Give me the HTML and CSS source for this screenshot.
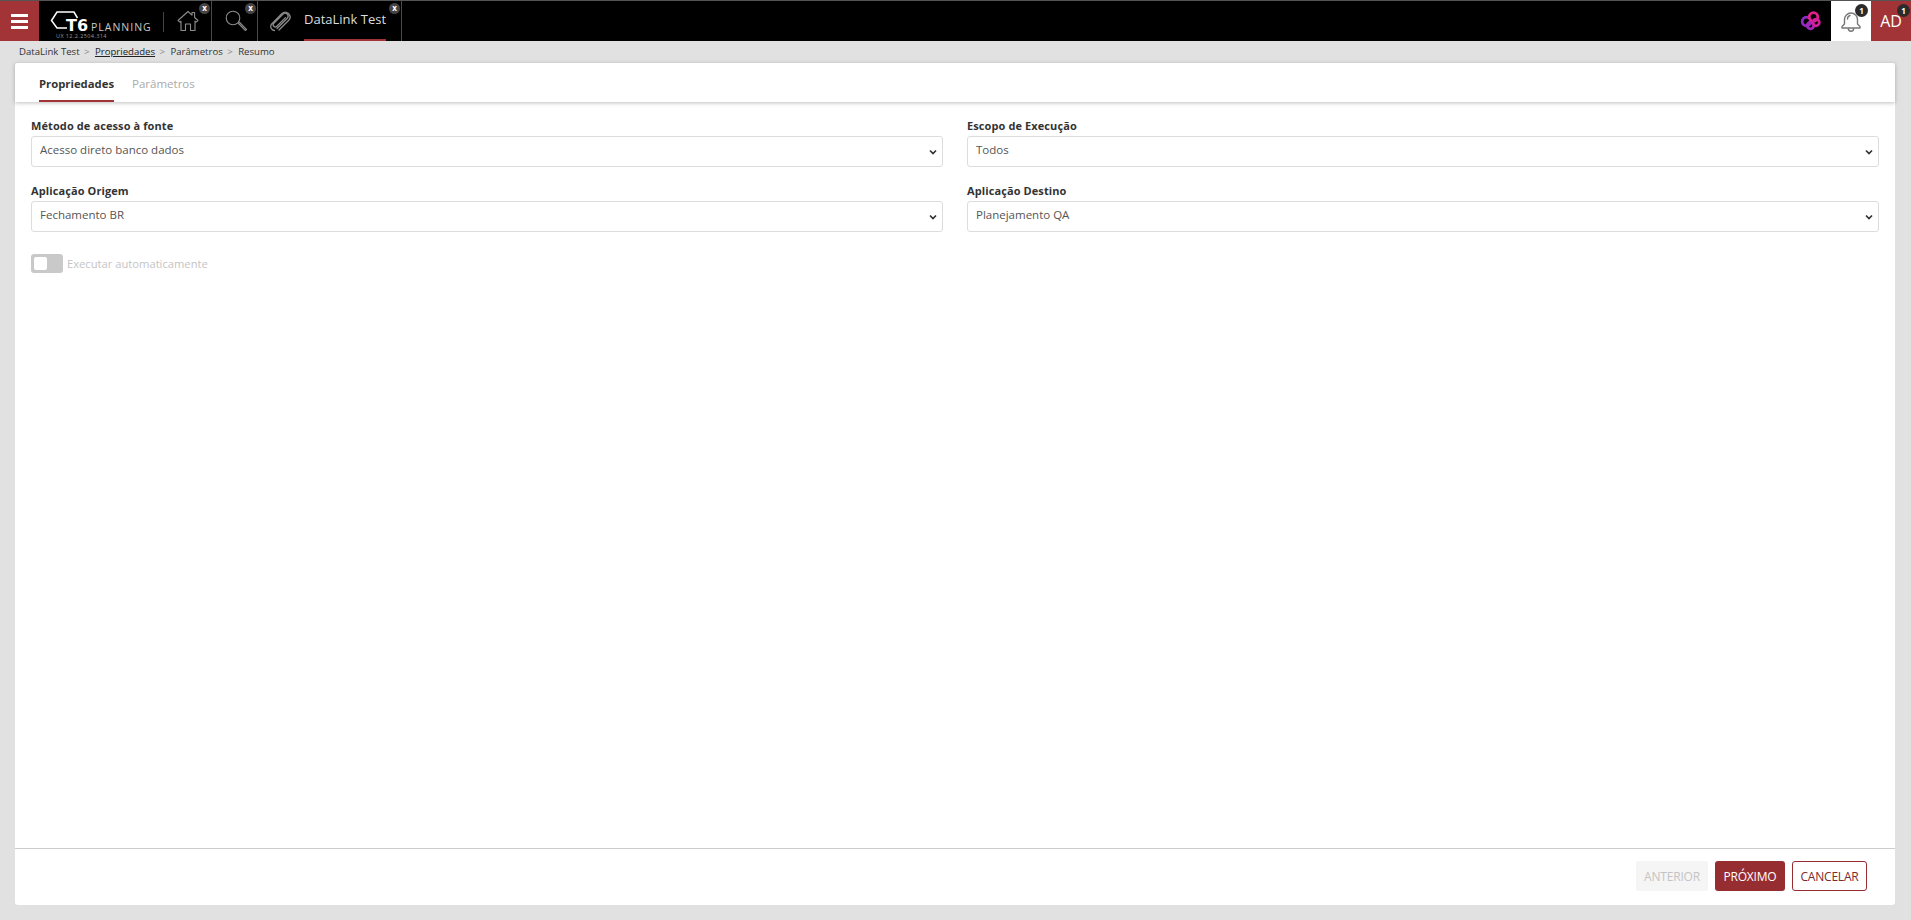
FILE: index.html
```html
<!DOCTYPE html>
<html lang="pt">
<head>
<meta charset="utf-8">
<title>DataLink Test</title>
<link rel="stylesheet" href="styles.css">
</head>
<body>
<header class="topbar">
  <button class="menu-btn" aria-label="Menu"><span></span><span></span><span></span></button>
  <div class="logo">
    <svg class="logo-mark" width="38" height="24" viewBox="0 0 38 24" fill="none">
      <path d="M17 19H7L1.500 11.500 7 3H24L27.500 9" stroke="#fff" stroke-width="1.500" fill="none"/>
    </svg>
    <span class="logo-t6">T6</span>
    <span class="logo-name">PLANNING</span>
    <span class="logo-ver">UX 12.2.2504.314</span>
  </div>
  <div class="tab-sep"></div>
  <div class="app-tab home-tab">
    <svg width="22" height="22" viewBox="0 0 22 22" fill="none" stroke="#8c8c8c" stroke-width="1.1" stroke-linejoin="round">
      <path d="M1 10.5 11 1.5l4 3.6V2.5h2.6v5L21 10.5l-2 1.6-1-.9V20.500h-4.500v-6.500h-5V20.500H4V11.200l-1 .9z"/>
    </svg>
    <i class="close">x</i>
  </div>
  <div class="app-tab search-tab">
    <svg width="22" height="22" viewBox="0 0 22 22" fill="none" stroke="#8c8c8c" stroke-width="1.1">
      <circle cx="8" cy="8" r="6.800"/>
      <path d="M13 13l7.500 7.500 1-1.200L14.200 12" stroke-linejoin="round"/>
    </svg>
    <i class="close">x</i>
  </div>
  <div class="app-tab doc-tab">
    <svg class="clip" width="22" height="22" viewBox="0 0 22 22" fill="none" stroke="#8c8c8c" stroke-width="1.300" stroke-linecap="round">
      <path d="M7 18.500 17.500 8a3 3 0 0 0-4.200-4.200L3.800 13.300a2.100 2.100 0 0 0 3 3L15.500 7.600"/>
      <path d="M4.500 20.500a4 4 0 0 1-3-6.300L12 3.500a4.800 4.800 0 0 1 7 6.500L9 20"/>
    </svg>
    <span class="doc-title">DataLink Test</span>
    <i class="close">x</i>
  </div>
  <div class="spacer"></div>
  <svg class="brand-knot" width="22" height="20" viewBox="0 0 22 20" fill="none" stroke-width="2.800">
    <circle cx="6.500" cy="10.500" r="4.300" stroke="#8d2bc8"/>
    <circle cx="10.500" cy="14.500" r="3.300" stroke="#a326b8"/>
    <circle cx="13.500" cy="6" r="4.300" stroke="#e0218a"/>
    <circle cx="16" cy="11.500" r="3.300" stroke="#d0209a"/>
  </svg>
  <div class="bell-box">
    <svg width="22" height="22" viewBox="0 0 22 22" fill="none" stroke="#777" stroke-width="1.400" stroke-linejoin="round" stroke-linecap="round">
      <path d="M4.500 14V9.500a6.500 6.500 0 0 1 13 0V14l2.500 2.500v1.500H2v-1.500z"/>
      <path d="M8.300 18.500a2.700 2.700 0 0 0 5.400 0"/>
      <path d="M7.500 9c0-1.800 1-3 2.500-3.500"/>
    </svg>
    <b class="count">1</b>
  </div>
  <div class="user-box">AD<b class="count">1</b></div>
</header>

<nav class="crumbs">
  <span>DataLink Test</span><em>&gt;</em>
  <a href="#">Propriedades</a><em>&gt;</em>
  <span>Parâmetros</span><em>&gt;</em>
  <span>Resumo</span>
</nav>

<main class="card">
  <div class="tabs">
    <a class="tab active" href="#">Propriedades</a>
    <a class="tab" href="#">Parâmetros</a>
  </div>
  <form class="form">
    <div class="grid">
      <label class="field"><span>Método de acesso à fonte</span>
        <select><option>Acesso direto banco dados</option></select></label>
      <label class="field"><span>Escopo de Execução</span>
        <select><option>Todos</option></select></label>
      <label class="field"><span>Aplicação Origem</span>
        <select><option>Fechamento BR</option></select></label>
      <label class="field"><span>Aplicação Destino</span>
        <select><option>Planejamento QA</option></select></label>
    </div>
    <div class="switch-row">
      <span class="switch"><i></i></span>
      <span class="switch-label">Executar automaticamente</span>
    </div>
  </form>
  <footer class="actions">
    <button type="button" class="btn ghost">ANTERIOR</button>
    <button type="button" class="btn primary">PRÓXIMO</button>
    <button type="button" class="btn outline">CANCELAR</button>
  </footer>
</main>
</body>
</html>
```
FILE: styles.css
```css
* { box-sizing: border-box; }
html, body { height: 100%; }
body {
  margin: 0;
  background: #e1e1e1;
  font-family: "Open Sans", "Noto Sans", sans-serif;
  color: #333;
  display: flex;
  flex-direction: column;
  overflow: hidden;
}
.topbar {
  height: 41px;
  flex: none;
  display: flex;
  align-items: stretch;
  background: #000;
  border-top: 1px solid #555;
}
.menu-btn {
  width: 39px;
  padding: 0 11px;
  border: 0;
  background: #a23336;
  display: flex;
  flex-direction: column;
  justify-content: center;
  gap: 3px;
}
.menu-btn span { display: block; height: 3px; background: #fff; }
.logo { width: 124px; position: relative; flex: none; }
.logo-mark { position: absolute; left: 11px; top: 8px; }
.logo-t6 {
  position: absolute; left: 27px; top: 15px;
  font: 700 16px/19px "DejaVu Sans", sans-serif;
  color: #fff;
}
.logo-name {
  position: absolute; left: 52px; top: 19px;
  font-size: 10.500px; line-height: 14px; color: #c8c8c8; letter-spacing: 1px;
}
.logo-ver {
  position: absolute; left: 17px; top: 32px;
  font-size: 5.500px; line-height: 7px; color: #9a9a9a; letter-spacing: .4px;
}
.tab-sep { width: 1px; height: 20px; margin-top: 11px; background: #444; flex: none; }
.app-tab {
  position: relative;
  flex: none;
  display: flex;
  align-items: center;
  border-right: 1px solid #4a4a4a;
}
.home-tab { width: 48px; padding-left: 13px; }
.search-tab { width: 46px; padding-left: 13px; }
.doc-tab { width: 144px; padding-left: 12px; }
.clip { flex: none; }
.close {
  position: absolute; right: 1px; top: 2px;
  width: 11px; height: 11px; border-radius: 50%;
  background: #444; color: #fff;
  font: 700 8px/10px "Open Sans", sans-serif; text-align: center;
}
.doc-title {
  margin-left: 12px;
  height: 40px;
  padding-top: 9px;
  font-size: 13px; line-height: 18px; color: #ddd;
  border-bottom: 2px solid #a23336;
  margin-top: -1px;
}
.spacer { flex: 1; }
.brand-knot { align-self: center; margin-right: 9px; flex: none; }
.bell-box {
  width: 40px; background: #fff; position: relative;
  display: flex; align-items: center; justify-content: center; flex: none;
}
.user-box {
  width: 40px; background: #a23336; position: relative; color: #fff;
  font-size: 16px; line-height: 40px; text-align: center; flex: none;
}
.count {
  position: absolute; right: 1px; top: 3px;
  width: 13px; height: 13px; border-radius: 50%;
  background: #2b2b2b; color: #fff;
  font: 700 8px/13px "Open Sans", sans-serif; text-align: center;
}
.bell-box .count { right: 3px; }
.crumbs {
  height: 22px; flex: none;
  padding: 0 0 2px 19px;
  display: flex; align-items: center;
  font-size: 9.600px; color: #333;
}
.crumbs a { color: #222; text-decoration: underline; }
.crumbs em { font-style: normal; color: #888; margin: 0 5.500px 0 4.400px; }
.card {
  flex: 1;
  margin: 0 16px 15px 15px;
  background: #fff;
  border-radius: 3px;
  display: flex;
  flex-direction: column;
  min-height: 0;
}
.tabs {
  height: 39px; flex: none;
  padding-left: 24px;
  display: flex; gap: 18px;
  box-shadow: 0 1px 4px rgba(0,0,0,.25);
}
.tab {
  height: 39px; padding-top: 13px;
  font-size: 11.500px; line-height: 16px; color: #aaa;
  text-decoration: none;
}
.tab.active { font-size: 11.300px; font-weight: 700; color: #333; border-bottom: 2px solid #a23336; }
.form { flex: 1; padding: 16px 16px 0; min-height: 0; }
.grid {
  display: grid;
  grid-template-columns: 1fr 1fr;
  column-gap: 24px;
  row-gap: 16px;
}
.field { display: block; }
.field span {
  display: block;
  font-size: 11px; line-height: 16px; font-weight: 700; color: #333;
  letter-spacing: .1px;
  margin-bottom: 2px;
}
.field select {
  display: block; width: 100%; height: 31px;
  padding: 0 20px 4px 8px;
  font: 11.500px "Open Sans", sans-serif; color: #555;
  border: 1px solid #ddd; border-radius: 3px;
  outline: none;
  appearance: none;
  background: #fff url("data:image/svg+xml,%3Csvg xmlns='http://www.w3.org/2000/svg' width='8' height='6' viewBox='0 0 8 6'%3E%3Cpath d='M1 1.500l3 3 3-3' fill='none' stroke='%23333' stroke-width='1.700'/%3E%3C/svg%3E") no-repeat right 5px center;
}
.switch-row { display: flex; align-items: center; gap: 4px; margin-top: 22px; }
.switch {
  width: 32px; height: 19px; border-radius: 3px; background: #c9c9c9;
  padding: 3px; display: block;
}
.switch i { display: block; width: 13px; height: 13px; border-radius: 2px; background: #fff; }
.switch-label { font-size: 11.200px; line-height: 16px; color: #c4c4c4; }
.actions {
  height: 57px; flex: none;
  border-top: 1px solid #ccc;
  padding: 12px 28px 0 0;
  display: flex; justify-content: flex-end; gap: 7px;
}
.btn {
  height: 30px; border-radius: 3px;
  font: 12px "Open Sans", sans-serif; padding: 0;
  letter-spacing: -.2px;
}
.ghost { width: 72px; background: #f5f5f5; border: 0; color: #c4c4c4; }
.primary { width: 70px; background: #962d31; border: 0; color: #fff; }
.outline { width: 75px; background: #fff; border: 1px solid #962d31; color: #7d2a2e; }
```
